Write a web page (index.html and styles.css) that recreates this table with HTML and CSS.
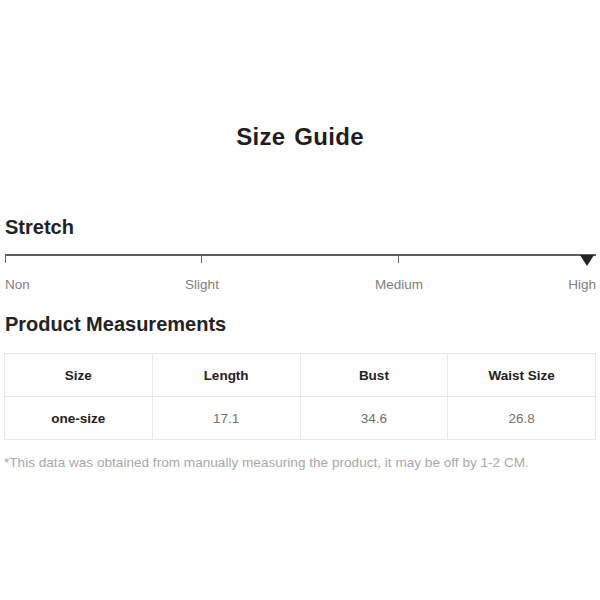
FILE: index.html
```html
<!DOCTYPE html>
<html lang="en">
<head>
<meta charset="utf-8">
<title>Size Guide</title>
<link rel="stylesheet" href="styles.css">
</head>
<body>
<main class="guide">
  <h1 class="title">Size Guide</h1>

  <section class="stretch">
    <h2 class="heading">Stretch</h2>
    <div class="scale">
      <div class="track">
        <span class="tick"></span>
        <span class="tick"></span>
        <span class="tick"></span>
        <span class="marker"></span>
      </div>
      <div class="labels">
        <span class="lbl lbl-non">Non</span>
        <span class="lbl lbl-slight">Slight</span>
        <span class="lbl lbl-medium">Medium</span>
        <span class="lbl lbl-high">High</span>
      </div>
    </div>
  </section>

  <section class="measure">
    <h2 class="heading">Product Measurements</h2>
    <table class="table">
      <thead>
        <tr><th>Size</th><th>Length</th><th>Bust</th><th>Waist Size</th></tr>
      </thead>
      <tbody>
        <tr><td class="size">one-size</td><td>17.1</td><td>34.6</td><td>26.8</td></tr>
      </tbody>
    </table>
    <p class="note">*This data was obtained from manually measuring the product, it may be off by 1-2 CM.</p>
  </section>
</main>
</body>
</html>
```

FILE: styles.css
```css
html, body {
  margin: 0;
  padding: 0;
  background: #ffffff;
}

body {
  font-family: "Liberation Sans", Arial, sans-serif;
  color: #222222;
}

.guide {
  width: 592px;
  padding: 121px 4px 0 4px;
}

.title {
  margin: 0;
  font-size: 24px;
  line-height: 32px;
  font-weight: 700;
  text-align: center;
  letter-spacing: 0.3px;
  word-spacing: 2px;
  color: #1e1e1e;
}

.heading {
  margin: 0;
  font-size: 20px;
  line-height: 26px;
  font-weight: 700;
  color: #222222;
  padding-left: 1px;
}

.stretch {
  margin-top: 61px;
}

.scale {
  margin-top: 14px;
  padding-left: 1px;
}

.track {
  position: relative;
  height: 11px;
  border-top: 2px solid #5e5e5e;
}

.tick {
  position: absolute;
  top: 0;
  width: 1px;
  height: 7px;
  background: #666666;
}

.tick:nth-child(1) { left: 0; }
.tick:nth-child(2) { left: 196px; }
.tick:nth-child(3) { left: 393px; }

.marker {
  position: absolute;
  top: -1px;
  right: 2px;
  width: 0;
  height: 0;
  border-left: 7px solid transparent;
  border-right: 7px solid transparent;
  border-top: 11px solid #222222;
}

.labels {
  display: grid;
  grid-template-columns: repeat(6, 1fr);
  margin-top: 10px;
  font-size: 13.5px;
  line-height: 16px;
  color: #808080;
}

.lbl {
  white-space: nowrap;
}

.lbl-non { grid-column: 1; text-align: left; }
.lbl-slight { grid-column: 2 / span 2; text-align: center; }
.lbl-medium { grid-column: 4 / span 2; text-align: center; }
.lbl-high { grid-column: 6; text-align: right; }

.measure {
  margin-top: 18px;
}

.table {
  margin-top: 16px;
  width: 592px;
  border-collapse: collapse;
  table-layout: fixed;
  font-size: 13.5px;
}

.table th,
.table td {
  border: 1px solid #e8e8e8;
  height: 42px;
  padding: 0;
  text-align: center;
  vertical-align: middle;
}

.table th {
  font-weight: 700;
  color: #222222;
}

.table td {
  color: #707070;
}

.table td.size {
  font-weight: 700;
  color: #222222;
}

.note {
  margin: 15px 0 0 0;
  font-size: 13.6px;
  line-height: 16px;
  color: #a8a8a8;
}
```
